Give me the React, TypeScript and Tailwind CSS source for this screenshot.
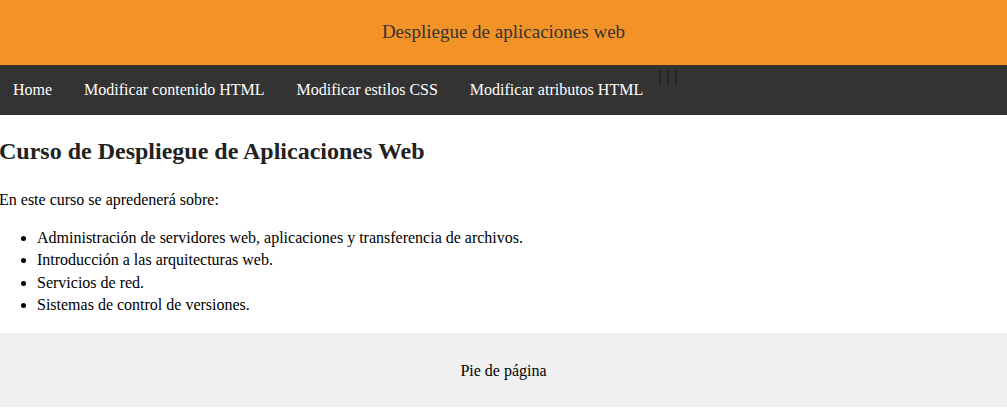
export default function App() {
  const links = ["Home", "Modificar contenido HTML", "Modificar estilos CSS", "Modificar atributos HTML"];
  return (
    <div className="min-h-screen bg-white font-['Liberation_Serif',serif] text-[16px] leading-[1.4] text-black">
      <header className="flex h-[65px] items-center justify-center bg-[#f39327]">
        <h1 className="text-[19px] font-normal text-[#333]">Despliegue de aplicaciones web</h1>
      </header>

      <nav className="flex h-[50px] items-center bg-[#333]">
        {links.map((l) => (
          <a key={l} href="#" className="pr-[16px] text-white first:pl-[13px] [&:not(:first-child)]:pl-[16px]">
            {l}
          </a>
        ))}
        <div className="mt-[5px] flex h-[15px] gap-[6px] self-start">
          <span className="w-[2px] bg-[#262424]" />
          <span className="w-[2px] bg-[#262424]" />
          <span className="w-[2px] bg-[#262424]" />
        </div>
      </nav>

      <main>
        <h2 className="my-[20px] -ml-[1px] text-[24px] font-bold text-[#222]">Curso de Despliegue de Aplicaciones Web</h2>
        <p className="my-[16px] -ml-[1px]">En este curso se apredenerá sobre:</p>
        <ul className="my-[16px] list-disc pl-[37px]">
          <li>Administración de servidores web, aplicaciones y transferencia de archivos.</li>
          <li>Introducción a las arquitecturas web.</li>
          <li>Servicios de red.</li>
          <li>Sistemas de control de versiones.</li>
        </ul>
      </main>

      <footer className="flex h-[74px] items-center justify-center bg-[#f0f0f0] pt-[4px]">
        <p>Pie de página</p>
      </footer>
    </div>
  );
}
